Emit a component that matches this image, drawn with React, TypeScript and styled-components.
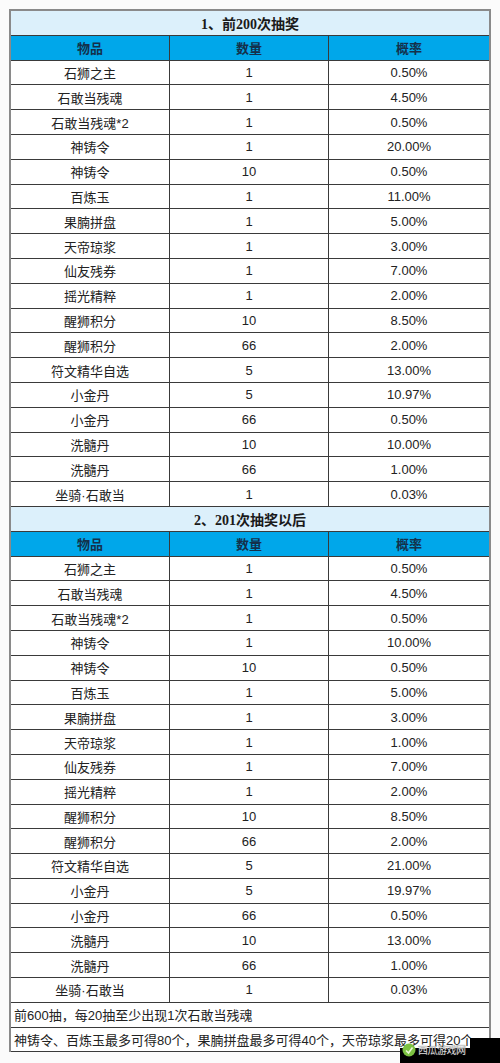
import React from 'react';
import styled, { createGlobalStyle } from 'styled-components';

const GlobalStyle = createGlobalStyle`
  html, body {
    margin: 0;
    padding: 0;
    background: #fbfbfb;
  }
  body {
    font-family: "Liberation Sans", "Noto Sans CJK SC", sans-serif;
    color: #222;
  }
`;

const Page = styled.div`
  position: relative;
  width: 500px;
  height: 1063px;
  padding: 9px 9px 0 9px;
  box-sizing: border-box;
  overflow: hidden;
`;

const Sheet = styled.div`
  border: 2px solid #8a8a8a;
  border-bottom: none;
  background: #fff;
`;

const Row = styled.div<{ $kind?: 'title' | 'head' | 'body' | 'note' }>`
  display: grid;
  grid-template-columns: ${p => (p.$kind === 'title' || p.$kind === 'note' ? '1fr' : '159px 159px 1fr')};
  height: 24.8px;
  box-sizing: border-box;
  border-bottom: 1px solid #3a3a3a;
  background: ${p => (p.$kind === 'title' ? '#dcf0fb' : p.$kind === 'head' ? '#00a7ea' : '#fff')};
`;

const Cell = styled.div<{ $head?: boolean }>`
  display: flex;
  align-items: center;
  justify-content: center;
  font-size: 13px;
  font-weight: ${p => (p.$head ? 700 : 400)};
  color: ${p => (p.$head ? '#14304a' : '#222')};
  border-right: 1px solid #3a3a3a;
  white-space: nowrap;
  &:last-child {
    border-right: none;
  }
`;

const Title = styled.div`
  display: flex;
  align-items: center;
  justify-content: center;
  font-family: "Liberation Serif", "Noto Sans CJK SC", serif;
  font-size: 14px;
  font-weight: 700;
  color: #1a1a1a;
`;

const Note = styled.div`
  display: flex;
  align-items: center;
  padding-left: 3px;
  font-size: 13px;
  color: #222;
  white-space: nowrap;
`;

const Watermark = styled.div`
  position: absolute;
  right: 0;
  bottom: 0;
  width: 100px;
  height: 25px;
`;

const WmBlock = styled.div<{ $top: number; $left: number }>`
  position: absolute;
  top: ${p => p.$top}px;
  left: ${p => p.$left}px;
  right: 0;
  bottom: 0;
  background: #000;
`;

const WmLogo = styled.div`
  position: absolute;
  left: 2px;
  top: 4px;
  display: flex;
  align-items: center;
  gap: 2px;
`;

const WmText = styled.span`
  font-size: 10px;
  color: #d8d8d8;
  letter-spacing: -0.5px;
  font-family: "Noto Sans CJK SC", sans-serif;
  text-shadow: 0 0 1px #555;
`;

const first: string[][] = [
  ['石狮之主', '1', '0.50%'],
  ['石敢当残魂', '1', '4.50%'],
  ['石敢当残魂*2', '1', '0.50%'],
  ['神铸令', '1', '20.00%'],
  ['神铸令', '10', '0.50%'],
  ['百炼玉', '1', '11.00%'],
  ['果腩拼盘', '1', '5.00%'],
  ['天帝琼浆', '1', '3.00%'],
  ['仙友残券', '1', '7.00%'],
  ['摇光精粹', '1', '2.00%'],
  ['醒狮积分', '10', '8.50%'],
  ['醒狮积分', '66', '2.00%'],
  ['符文精华自选', '5', '13.00%'],
  ['小金丹', '5', '10.97%'],
  ['小金丹', '66', '0.50%'],
  ['洗髓丹', '10', '10.00%'],
  ['洗髓丹', '66', '1.00%'],
  ['坐骑·石敢当', '1', '0.03%'],
];

const second: string[][] = [
  ['石狮之主', '1', '0.50%'],
  ['石敢当残魂', '1', '4.50%'],
  ['石敢当残魂*2', '1', '0.50%'],
  ['神铸令', '1', '10.00%'],
  ['神铸令', '10', '0.50%'],
  ['百炼玉', '1', '5.00%'],
  ['果腩拼盘', '1', '3.00%'],
  ['天帝琼浆', '1', '1.00%'],
  ['仙友残券', '1', '7.00%'],
  ['摇光精粹', '1', '2.00%'],
  ['醒狮积分', '10', '8.50%'],
  ['醒狮积分', '66', '2.00%'],
  ['符文精华自选', '5', '21.00%'],
  ['小金丹', '5', '19.97%'],
  ['小金丹', '66', '0.50%'],
  ['洗髓丹', '10', '13.00%'],
  ['洗髓丹', '66', '1.00%'],
  ['坐骑·石敢当', '1', '0.03%'],
];

const Section = ({ title, rows }: { title: string; rows: string[][] }) => (
  <>
    <Row $kind="title">
      <Title>{title}</Title>
    </Row>
    <Row $kind="head">
      <Cell $head>物品</Cell>
      <Cell $head>数量</Cell>
      <Cell $head>概率</Cell>
    </Row>
    {rows.map((r, i) => (
      <Row key={i}>
        {r.map((v, j) => (
          <Cell key={j}>{v}</Cell>
        ))}
      </Row>
    ))}
  </>
);

export default function App() {
  return (
    <Page>
      <GlobalStyle />
      <Sheet>
        <Section title="1、前200次抽奖" rows={first} />
        <Section title="2、201次抽奖以后" rows={second} />
        <Row $kind="note">
          <Note>前600抽，每20抽至少出现1次石敢当残魂</Note>
        </Row>
        <Row $kind="note">
          <Note>神铸令、百炼玉最多可得80个，果腩拼盘最多可得40个，天帝琼浆最多可得20个</Note>
        </Row>
      </Sheet>
      <Watermark>
        <WmBlock $top={10} $left={0} />
        <WmBlock $top={0} $left={70} />
        <WmLogo>
          <svg width="14" height="14" viewBox="0 0 14 14">
            <circle cx="7" cy="7" r="6.5" fill="#7cc242" />
            <path d="M4 7.5 L6.5 10 L10.5 4.5" stroke="#e9f7d8" strokeWidth="1.6" fill="none" />
          </svg>
          <WmText>西瓜游戏网</WmText>
        </WmLogo>
      </Watermark>
    </Page>
  );
}
